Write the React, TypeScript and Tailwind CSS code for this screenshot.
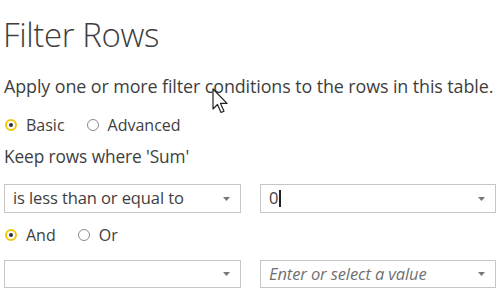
import React from 'react';

function Radio({ checked, label }: { checked?: boolean; label: string }) {
  return (
    <label className="flex items-center gap-[9px]">
      <span
        className={`flex h-[12px] w-[12px] items-center justify-center rounded-full ${
          checked ? 'border-2 border-[#f2c811]' : 'border-[1.5px] border-[#8a8a8a]'
        }`}
      >
        {checked && <span className="h-[4px] w-[4px] rounded-full bg-[#333]" />}
      </span>
      <span>{label}</span>
    </label>
  );
}

function Caret() {
  return (
    <svg width="7" height="4" viewBox="0 0 7 4" className="shrink-0">
      <path d="M0 0h7L3.5 4z" fill="#777" />
    </svg>
  );
}

export default function App() {
  return (
    <div className="relative h-[293px] w-[500px] overflow-hidden bg-white font-['Open_Sans',sans-serif] text-[#3e3e3e]">
      {/* Title */}
      <h1 className="pl-[3px] pt-[13px] text-[33px] font-light leading-[44px] tracking-[-0.4px]">Filter Rows</h1>

      <p className="mt-[17px] pl-[4px] text-[17.9px] leading-[24px] tracking-[-0.1px]">
        Apply one or more filter conditions to the rows in this table.
      </p>

      <div className="mt-[16px] flex gap-[22px] pl-[5px] text-[16px] leading-[22px]">
        <Radio checked label="Basic" />
        <Radio label="Advanced" />
      </div>

      <p className="mt-[10px] pl-[4px] text-[17.3px] leading-[22px] tracking-[-0.1px]">Keep rows where 'Sum'</p>

      {/* Condition row 1 */}
      <div className="mt-[16px] flex items-center gap-[19px] pl-[4px]">
        <div className="flex h-[29px] w-[237px] items-center justify-between border border-[#c6c6c6] pl-[8px] pr-[10px] text-[16.5px]">
          <span className="tracking-[-0.1px]">is less than or equal to</span>
          <Caret />
        </div>
        <div className="flex h-[29px] w-[236px] items-center justify-between border border-[#c6c6c6] pl-[8px] pr-[10px] text-[16.5px]">
          <span className="flex items-center">
            0<span className="ml-[1px] inline-block h-[17px] w-[1.5px] bg-[#222]" />
          </span>
          <Caret />
        </div>
      </div>

      <div className="mt-[11px] flex gap-[22px] pl-[5px] text-[16px] leading-[22px]">
        <Radio checked label="And" />
        <Radio label="Or" />
      </div>

      {/* Condition row 2 */}
      <div className="mt-[14px] flex items-center gap-[19px] pl-[4px]">
        <div className="flex h-[28px] w-[237px] items-center justify-end border border-[#c6c6c6] pr-[10px]">
          <Caret />
        </div>
        <div className="flex h-[28px] w-[236px] items-center justify-between border border-[#c6c6c6] pl-[8px] pr-[10px] text-[16.5px] italic tracking-[-0.1px] text-[#707070]">
          <span>Enter or select a value</span>
          <Caret />
        </div>
      </div>

      {/* Mouse pointer */}
      <svg className="absolute left-[212px] top-[88px]" width="16" height="26" viewBox="0 0 16 26">
        <path d="M1 1v20l4.5-4.5 3.5 8 3-1.3-3.5-7.8H15z" fill="#fff" stroke="#222" strokeWidth="1.2" strokeLinejoin="round" />
      </svg>
    </div>
  );
}
